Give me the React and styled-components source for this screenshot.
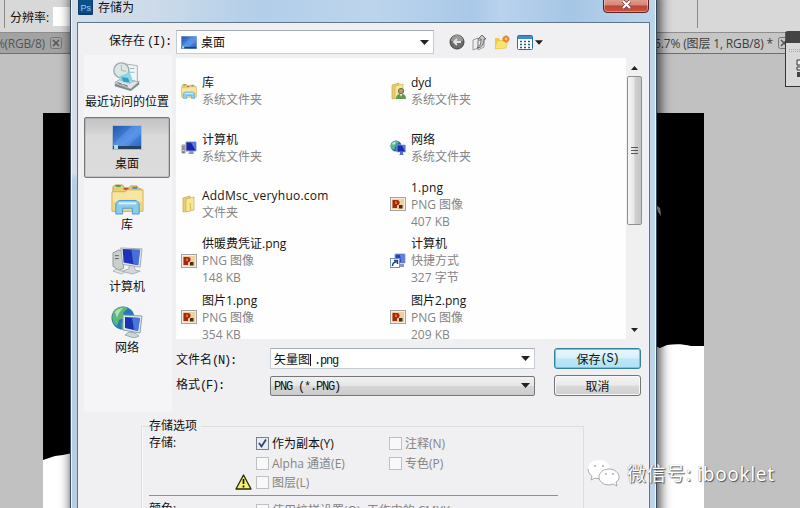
import React from 'react';
import styled, { createGlobalStyle } from 'styled-components';

const GlobalStyle = createGlobalStyle`
    *{
        box-sizing:border-box;
    }
    body{
        margin:0;
        overflow:hidden;
        font-family:"Open Sans", "Noto Sans CJK SC", sans-serif;
        font-size:12px;
        color:#111;
    }
    svg{
        display:block;
        flex:none;
    }
`
const Desktop = styled.div`
    position:relative;
    display:flex;
    flex-direction:column;
    width:800px;
    height:508px;
    overflow:hidden;
    background:#c1c1c2;
`
const OptionsBar = styled.div`
    display:flex;
    align-items:center;
    height:33px;
    flex:none;
    padding-left:4px;
    background:#d8d8d8;
    border-bottom:1px solid #8d8d8d;
`
const Divider = styled.div`
    width:1px;
    height:28px;
    background:#8b8b8b;
    margin-left:${props => props.$left || 0}px;
    align-self:flex-start;
`
const Resolution = styled.label`
    margin-left:5px;
    padding-top:1px;
    white-space:nowrap;
`
const ResolutionField = styled.div`
    width:81px;
    height:19px;
    margin-left:4px;
    background:#fff;
`
const TabBar = styled.div`
    display:flex;
    align-items:center;
    justify-content:space-between;
    height:21px;
    flex:none;
    background:#a2a2a2;
    border-bottom:1px solid #6f6f6f;
`
const Tab = styled.div`
    display:flex;
    align-items:center;
    gap:5px;
    height:20px;
    color:${props => props.$active ? '#3d3d3d' : '#565656'};
    background:${props => props.$active ? '#c6c6c6' : '#a2a2a2'};
    width:${props => props.$width}px;
    white-space:nowrap;
    overflow:hidden;
`
const TabName = styled.span`
    letter-spacing:${props => props.$spacing || 0}px;
    margin-left:${props => props.$shift || 0}px;
`
const Panel = styled.div`
    position:absolute;
    left:785px;
    top:31px;
    width:20px;
    height:56px;
    background:#d9d9d9;
    border:1px solid #343434;
    border-top:12px solid #444;
    border-radius:3px 0 0 0;
    padding:5px 0 0 3px;
`
const Dialog = styled.div`
    position:absolute;
    left:70px;
    top:-6px;
    width:587px;
    height:540px;
    display:flex;
    flex-direction:column;
    padding:0 6px;
    border:1px solid #38495b;
    background:
        linear-gradient(180deg, rgba(184,207,227,0) 178px, #b8cfe3 184px) 0 0 / 7px 100% no-repeat,
        linear-gradient(90deg, #d5dee8 0, #cddbe9 80px, #b2cee9 190px, #bdd5ec 300px, #a9c8e8 400px, #b9d2ed 430px, #a6c6e6 500px, #bed6eb 587px);
    box-shadow:inset 1px 0 #f1f6fb, inset -1px 0 #eef6fb, 2px 0 10px 2px rgba(0,0,0,.65);
`
const TitleBar = styled.div`
    display:flex;
    align-items:flex-start;
    height:27px;
    flex:none;
    padding:3px 1px 0 1px;
`
const Title = styled.div`
    margin-left:5px;
    line-height:19px;
    flex:1;
`
const CloseButton = styled.div`
    width:46px;
    height:15px;
    display:flex;
    justify-content:center;
    align-items:flex-end;
    padding-bottom:3px;
    border:1px solid #5b2320;
    border-radius:0 0 4px 4px;
    background:linear-gradient(#e0a095 0, #d98578 6px, #c04432 7px, #c95545 100%);
    box-shadow:inset 0 0 0 1px rgba(255,255,255,.35);
`
const Client = styled.div`
    flex:1;
    display:flex;
    flex-direction:column;
    background:#f0eff1;
    border:1px solid #5f7588;
    padding-left:6px;
`
const LookIn = styled.div`
    display:flex;
    align-items:center;
    height:35px;
    flex:none;
    padding-top:3px;
`
const Label = styled.div`
    width:${props => props.$width}px;
    padding-left:${props => props.$left || 0}px;
    padding-bottom:${props => props.$lift || 0}px;
    white-space:nowrap;
`
const Mono = styled.span`
    font-family:"Liberation Mono", monospace;
    font-size:12px;
    letter-spacing:-1.2px;
    margin-left:${props => props.$left || 0}px;
`
const Combo = styled.div`
    display:flex;
    align-items:center;
    width:${props => props.$width}px;
    height:${props => props.$height}px;
    padding:0 4px 0 ${props => props.$left || 3}px;
    border:1px solid ${props => props.$button ? '#777' : '#c6ccd3'};
    border-top-color:${props => props.$button ? '#777' : '#a3abb5'};
    border-radius:${props => props.$button ? 2 : 0}px;
    background:${props => props.$button ? 'linear-gradient(#f1f1f1 0, #e6e6e6 48%, #d6d6d6 52%, #cbcbcb 100%)' : '#fff'};
    white-space:nowrap;
`
const ComboText = styled.div`
    flex:1;
    padding-left:${props => props.$left || 0}px;
`
const Caret = styled.span`
    display:inline-block;
    width:1px;
    height:12px;
    margin-right:3px;
    vertical-align:-2px;
    background:#111;
`
const Tools = styled.div`
    display:flex;
    align-items:center;
    gap:7px;
    padding-left:15px;
`
const Browser = styled.div`
    display:flex;
    height:281px;
    flex:none;
`
const Places = styled.div`
    width:88px;
    height:357px;
    margin-top:-3px;
    flex:none;
    background:#f5f5f7;
`
const Place = styled.div`
    display:flex;
    flex-direction:column;
    align-items:center;
    width:86px;
    height:61.5px;
    padding-top:3px;
    border:1px solid ${props => props.$selected ? '#777' : 'transparent'};
    border-radius:2px;
    background:${props => props.$selected ? 'linear-gradient(#c3c3c4 0, #d2d2d3 24%, #dadadb 30%, #dcdcdd 100%)' : 'none'};
    box-shadow:${props => props.$selected ? 'inset 0 0 0 1px rgba(120,120,120,.25)' : 'none'};
`
const IconSlot = styled.div`
    height:34px;
    display:flex;
    align-items:center;
`
const PlaceName = styled.div`
    line-height:16px;
    margin-top:1px;
    white-space:nowrap;
`
const FileList = styled.div`
    display:flex;
    width:466px;
    margin-left:4px;
    background:#fefefe;
`
const Files = styled.div`
    flex:1;
    display:grid;
    grid-template-columns:209px 209px;
    grid-auto-rows:56.5px;
    padding:5px 0 0 5px;
`
const File = styled.div`
    display:flex;
    align-items:center;
    gap:5px;
`
const FileText = styled.div`
    line-height:17px;
    color:#858585;
    white-space:nowrap;
`
const FileName = styled.div`
    color:#151515;
    letter-spacing:${props => props.$spacing || 0}px;
`
const Scrollbar = styled.div`
    width:16px;
    display:flex;
    flex-direction:column;
    align-items:center;
    justify-content:space-between;
    background:#f0f0f1;
    padding:8px 0 7px;
`
const Thumb = styled.div`
    width:15px;
    height:149px;
    margin:6px 0 auto;
    display:flex;
    flex-direction:column;
    justify-content:center;
    align-items:center;
    gap:2px;
    border:1px solid #8f8f8f;
    border-radius:2px;
    background:linear-gradient(90deg, #f6f6f6 0, #e8e8e9 45%, #cfcfd1 55%, #c5c5c8 100%);
`
const Grip = styled.div`
    width:7px;
    height:1px;
    background:#555;
`
const Fields = styled.div`
    display:grid;
    grid-template-columns:94px 284px 87px;
    grid-auto-rows:21px;
    row-gap:6px;
    align-items:center;
    padding:9px 0 0 92px;
    height:87px;
    flex:none;
`
const Button = styled.div`
    display:flex;
    align-items:center;
    justify-content:center;
    height:21px;
    border:1px solid ${props => props.$primary ? '#35809c' : '#757575'};
    border-radius:3px;
    background:${props => props.$primary ? 'linear-gradient(#e9f7fd 0, #d8f0fa 48%, #bde6f5 52%, #aee3f6 100%)' : 'linear-gradient(#f3f3f3 0, #ebebeb 48%, #dadada 52%, #cfcfcf 100%)'};
    box-shadow:inset 0 0 0 1px ${props => props.$primary ? '#50d3f4' : '#f8f8f8'};
`
const Group = styled.fieldset`
    width:443px;
    height:120px;
    margin:-8px 0 0 57px;
    padding:0 0 0 7px;
    border:1px solid #dededf;
    box-shadow:inset 1px 0 #fafafa;
    flex:none;
`
const Legend = styled.legend`
    padding:0 4px 0 0;
    line-height:16px;
`
const Options = styled.div`
    display:grid;
    grid-template-columns:86px 21px 133px 170px;
    grid-template-rows:20px 20px 18px;
    align-items:center;
    border-bottom:1px solid #8f8f8f;
    width:409px;
    height:63px;
    margin-top:-1px;
`
const Check = styled.div`
    grid-column:${props => props.$col};
    display:flex;
    align-items:center;
    gap:3px;
    color:${props => props.$on ? '#111' : '#858585'};
    white-space:nowrap;
`
const Box = styled.div`
    width:13px;
    height:13px;
    flex:none;
    border:1px solid ${props => props.$on ? '#77808b' : '#bfc0c3'};
    background:${props => props.$on ? '#e7edf7' : '#f8f8f8'};
`
const ColorRow = styled.div`
    display:grid;
    grid-template-columns:107px 300px;
    height:24px;
    padding-top:5px;
    line-height:16px;
`
const Watermark = styled.div`
    position:absolute;
    left:587px;
    top:457px;
    display:flex;
    align-items:center;
    gap:7px;
    height:32px;
    font-family:"Noto Sans", "Noto Sans CJK SC", sans-serif;
    font-size:19px;
    letter-spacing:.65px;
    color:#fff;
    white-space:nowrap;
    text-shadow:1px 1px 1px #555, 0 0 1px #777;
`

const Arrow = ({ up, w = 9 }) => (
    <svg width={w} height={w > 7 ? 5 : 4} viewBox="0 0 9 5">
        <path d={up ? 'M0 5 4.500 0 9 5z' : 'M0 0h9L4.500 5z'} fill="#222" />
    </svg>
)

const CloseBox = () => (
    <svg width="12" height="12" viewBox="0 0 12 12" fill="none" stroke="#555">
        <rect x=".5" y=".5" width="11" height="11" rx="2" stroke="#777" />
        <path d="m3 3 6 6m0-6-6 6" strokeWidth="1.500" />
    </svg>
)

const PsIcon = () => (
    <svg width="15" height="17" viewBox="0 0 15 17">
        <rect width="15" height="17" rx="1" fill="#0b3c6d" />
        <rect x="1" y="1" width="13" height="14" fill="#0d4f8b" />
        <text x="2.500" y="13" fontSize="9" fontFamily="Liberation Sans" fill="#8fd0f8">Ps</text>
    </svg>
)

const DesktopIcon = ({ w, h }) => (
    <svg width={w} height={h} viewBox="0 0 30 25" preserveAspectRatio="none">
        <defs>
            <linearGradient id="blue" x1="0" y1="0" x2="1" y2="1">
                <stop offset="0" stopColor="#2457ad" />
                <stop offset=".55" stopColor="#4c8ae2" />
                <stop offset="1" stopColor="#2a62bd" />
            </linearGradient>
        </defs>
        <rect width="30" height="25" fill="#a9bccf" />
        <rect x="1" y="1" width="28" height="23" fill="url(#blue)" />
        <path d="M1 19 20 1h9v8L16 21H1z" fill="#79aff4" opacity=".3" />
        <rect x="1" y="21" width="28" height="3" fill="#264262" />
        <rect x="2" y="20" width="4" height="4" fill="#b1dae4" />
    </svg>
)

const RecentIcon = () => (
    <svg width="30" height="32" viewBox="0 0 32 34">
        <path d="m3 24 8-5 18 4-9 8z" fill="#e1e5e5" stroke="#9da5a6" />
        <path d="m3 25 17 6v2L3 28zM20 31l9-8v3l-9 7z" fill="#7e8b8c" />
        <path d="m13 4 14 2v17l-14-3z" fill="#f2f5f4" stroke="#a1acac" />
        <circle cx="10" cy="11" r="8" fill="#dce6e5" stroke="#9eacad" strokeWidth="1.500" />
        <path d="M10 5v6l5 1" fill="none" stroke="#a5b6b9" />
        <path d="m8 17 11-4 3 8-5 4-9-3z" fill="#8dd4e8" />
        <path d="m10 18 7 1 2 5-7-1z" fill="#3a9ec0" />
        <path d="M19 9h5m-5 4h5m-6 12 6-3" stroke="#82b7c4" />
        <path d="m6 24 5 2m1 0 5 2" stroke="#4d6169" />
    </svg>
)

const LibraryIcon = ({ w = 33, h = 31 }) => (
    <svg width={w} height={h} viewBox="0 0 34 32" preserveAspectRatio="none">
        <path d="M2 3 4 1h8l2 3h5l1-2h7l2 3h2v23H2z" fill="#e8cd73" stroke="#bfa14c" />
        <path d="M5 2h5" stroke="#42a149" strokeWidth="2" />
        <path d="M13 5h5" stroke="#c84433" strokeWidth="2" />
        <path d="M22 4h5" stroke="#418cc4" strokeWidth="2" />
        <path d="M1 8h14l2-2h16v22H1z" fill="#f8e6a0" stroke="#cbb05b" />
        <path d="M2 18h30v9H2z" fill="#f0d77e" />
        <path d="M5 31V20l3-3h18l3 3v11h-7v-6H12v6z" fill="#8accea" stroke="#4c9ac4" />
        <path d="M8 20h18" stroke="#d9f2fc" strokeWidth="2" />
    </svg>
)

const ComputerIcon = ({ w = 31, h = 29 }) => (
    <svg width={w} height={h} viewBox="0 0 32 30" preserveAspectRatio="none">
        <path d="m1 7 6-3 5 2v17l-5 2-6-4z" fill="#cbd0cd" stroke="#929a98" />
        <path d="M3 10h4m-4 3h4" stroke="#59625f" />
        <path d="m9 2 22 1-2 19-18-3z" fill="#dee4e6" stroke="#a3adb4" />
        <path d="m11 3 18 1-2 16-15-3z" fill="#1c34b5" />
        <path d="m20 4 9 0-2 16-5-2z" fill="#5c88e6" opacity=".7" />
        <path d="m18 20 5 1 1 4 5 1-8 3-11-3 7-2z" fill="#d3d8dc" stroke="#a7aeb3" />
        <path d="m4 24 9 3-3 2-9-3z" fill="#e4e5e4" stroke="#b0b4b3" />
    </svg>
)

const NetworkIcon = ({ w = 32, h = 32 }) => (
    <svg width={w} height={h} viewBox="0 0 32 32" preserveAspectRatio="none">
        <circle cx="12" cy="12" r="11.500" fill="#2878b8" />
        <path d="M3 5c4-5 10-5 14-3l-5 5 1 5-5 2-2 6C1 17 0 10 3 5z" fill="#5bb974" />
        <path d="M4 6c2-3 5-4 8-4l-4 5-2 5z" fill="#d5f1d2" opacity=".7" />
        <path d="m10 17 6 1-1 5-4 1z" fill="#47ad67" />
        <path d="m12 9 19 1-2 17-17-3z" fill="#dce6ec" stroke="#8ba0b2" />
        <path d="m14 11 15 1-2 13-13-3z" fill="#1933b0" />
        <path d="m21 11 8 1-2 13-4-1z" fill="#5b8ce8" opacity=".75" />
        <path d="m18 26 6 1 4 3-5 2-9-3z" fill="#ccd5da" stroke="#9eabb4" />
    </svg>
)

const SmallComputerIcon = () => (
    <svg width="16" height="16" viewBox="0 0 16 16">
        <path d="M1 5h3v8H1z" fill="#d4d7d9" stroke="#777d84" strokeWidth=".8" />
        <path d="M1.500 7h2m-2 2h2m-2 3h2" stroke="#444" />
        <path d="M5 2h10v9H5z" fill="#1824a9" stroke="#8f9cc4" />
        <path d="M10 2.500h4.500v8z" fill="#587de0" />
        <path d="M9 11h3l1 3H7z" fill="#8799c9" />
    </svg>
)

const SmallNetworkIcon = () => (
    <svg width="16" height="16" viewBox="0 0 16 16">
        <circle cx="6" cy="6" r="5.500" fill="#2870ad" />
        <path d="M1 4c2-4 6-4 8-2L6 5l-2 5C1 9 0 7 1 4z" fill="#56b893" />
        <path d="M2 4c1-2 2-2 4-2L4 5z" fill="#c8ecdc" />
        <path d="M7 5h8.500v7H7z" fill="#1a29bd" stroke="#a9b8dc" strokeWidth=".7" />
        <path d="M12 5.500h3v6z" fill="#557ce6" />
        <path d="M10 12h3v2l1 1H9l1-1z" fill="#5972be" />
    </svg>
)

const FolderIcon = ({ user }) => (
    <svg width="16" height="18" viewBox="0 0 16 18">
        <path d="M2 3 9 1v15l-7 1z" fill="#e7cf69" stroke="#c5a84a" strokeWidth=".7" />
        <path d="m5 4 8-2v13l-8 2z" fill="#f6e798" stroke="#c9b058" strokeWidth=".7" />
        <path d="m9 8 1 8" stroke="#d8b84b" />
        {user && <g>
            <circle cx="11" cy="9" r="2.600" fill="#c3996d" stroke="#5d7043" />
            <path d="M6 17c0-4 2-5 5-5s5 1 5 5z" fill="#62994c" />
            <path d="m10 12 1 3 1-3z" fill="#fff" />
        </g>}
    </svg>
)

const PngIcon = () => (
    <svg width="16" height="16" viewBox="0 0 16 16">
        <rect x=".5" y="1.500" width="15" height="13" fill="#f7ede0" stroke="#a4a3a3" />
        <rect x="2" y="3" width="12" height="10" fill="#f0cf9f" />
        <path d="M2.500 4H7c3.500 0 3.500 5 0 5.500V12H2.500z" fill="#a32a10" />
        <path d="M5 5.500h2V8H5z" fill="#e7712b" />
        <rect x="9" y="9" width="3.500" height="3.500" fill="#46300f" />
    </svg>
)

const ShortcutIcon = () => (
    <svg width="16" height="16" viewBox="0 0 16 16">
        <path d="M5 1h10v9H5z" fill="#273ebd" stroke="#9aaad3" />
        <path d="M10 2h5v7h-4z" fill="#6282df" />
        <path d="M8 11h6v3H8z" fill="#8598c4" />
        <rect x=".5" y="5.500" width="9" height="9" fill="#fff" stroke="#7194ba" />
        <path d="M2.500 13c0-3 1-4 4-4M4 7.500h3.500V11" fill="none" stroke="#1b4784" strokeWidth="1.500" />
    </svg>
)

const BackIcon = () => (
    <svg width="16" height="16" viewBox="0 0 16 16">
        <circle cx="8" cy="8" r="7" fill="#6c6c6c" stroke="#444" />
        <path d="M2 7a6 6 0 0 1 12 0z" fill="#9a9a9a" />
        <path d="M12 8H5m3-3L5 8l3 3" fill="none" stroke="#e3e3e3" strokeWidth="1.800" />
    </svg>
)

const UpIcon = () => (
    <svg width="15" height="17" viewBox="0 0 15 17">
        <path d="m1 6 5-2v10l-5 2zM6 7l6-2v8l-6 3z" fill="#ededed" stroke="#999" />
        <path d="M5 14c4-2 4-6 4-9H6l4-4 4 4h-2c0 5-2 9-7 9z" fill="#c6c6c6" stroke="#555" strokeWidth=".8" />
    </svg>
)

const NewFolderIcon = () => (
    <svg width="16" height="15" viewBox="0 0 16 15">
        <path d="M1 3h4l1 2h6v8L1 14z" fill="#edc94f" />
        <path d="m1 14 2-8 11-1-2 8z" fill="#fae370" stroke="#e6c451" strokeWidth=".7" />
        <circle cx="12" cy="4" r="3.300" fill="#e98841" />
        <path d="M12 0v8M8 4h8" stroke="#e98841" />
        <circle cx="12" cy="4" r="1.200" fill="#ffd78d" />
    </svg>
)

const ViewIcon = () => (
    <svg width="16" height="15" viewBox="0 0 16 15">
        <rect x=".5" y=".5" width="15" height="14" rx="1" fill="#fff" stroke="#286da9" />
        <rect x="1" y="1" width="14" height="3" fill="#3d8bcb" />
        <path d="M3 6.500h2m2 0h2m2 0h2m-10 3h2m2 0h2m2 0h2m-10 3h2m2 0h2m2 0h2" stroke="#255a92" strokeWidth="1.500" />
    </svg>
)

const WarningIcon = () => (
    <svg width="17" height="16" viewBox="0 0 17 16">
        <path d="M8.500 1 16 15H1z" fill="#f7f16b" stroke="#28260b" strokeWidth="1.300" strokeLinejoin="round" />
        <path d="M8.500 5v5m0 1.500v2" stroke="#111" strokeWidth="1.700" />
    </svg>
)

const WechatIcon = () => (
    <svg width="33" height="30" viewBox="0 0 33 30">
        <path d="M12 2C5 2 1 6 1 11c0 3 2 6 4 7l-1 4 4-2 5 1c6 0 10-4 10-9 0-6-4-10-11-10z" fill="#fff" />
        <path d="M1 11c0 3 2 6 4 7l-1 4 4-2 5 1" fill="none" stroke="#999" strokeWidth=".8" />
        <path d="M22 11c-6 0-10 4-10 8s4 8 10 8l4-1 4 2-1-4c2-1 3-3 3-5 0-4-4-8-10-8z" fill="#fff" stroke="#888" strokeWidth=".7" />
        <path d="M7 8h2m6 0h2m1 8h2m5 0h2" stroke="#888" />
    </svg>
)

const Artwork = () => (
    <svg width="800" height="454" viewBox="0 54 800 454">
        <rect x="43" y="113" width="661" height="395" fill="#fff" />
        <path d="M43 113h661v233h-13c-8-2-16-2-24-1l-7 3-5-2v107H72l-9 2-8 1-12 4z" fill="#000" />
        <path d="m656 205 4 3 1 8-3-4z" fill="#bbb" />
    </svg>
)

const places = [
    { name: '最近访问的位置', icon: <RecentIcon /> },
    { name: '桌面', icon: <DesktopIcon w={30} h={25} />, selected: true },
    { name: '库', icon: <LibraryIcon /> },
    { name: '计算机', icon: <ComputerIcon /> },
    { name: '网络', icon: <NetworkIcon /> },
]

const files = [
    { name: '库', icon: <LibraryIcon w={16} h={15} />, info: ['系统文件夹'] },
    { name: 'dyd', icon: <FolderIcon user />, info: ['系统文件夹'] },
    { name: '计算机', icon: <SmallComputerIcon />, info: ['系统文件夹'] },
    { name: '网络', icon: <SmallNetworkIcon />, info: ['系统文件夹'] },
    { name: 'AddMsc_veryhuo.com', icon: <FolderIcon />, info: ['文件夹'], spacing: .22 },
    { name: '1.png', icon: <PngIcon />, info: ['PNG 图像', '407 KB'], spacing: .2 },
    { name: '供暖费凭证.png', icon: <PngIcon />, info: ['PNG 图像', '148 KB'] },
    { name: '计算机', icon: <ShortcutIcon />, info: ['快捷方式', '327 字节'] },
    { name: '图片1.png', icon: <PngIcon />, info: ['PNG 图像', '354 KB'] },
    { name: '图片2.png', icon: <PngIcon />, info: ['PNG 图像', '209 KB'] },
]

function SaveDialog() {
    return (
        <Dialog>
            <TitleBar>
                <PsIcon />
                <Title>存储为</Title>
                <CloseButton>
                    <svg width="11" height="9" viewBox="0 0 11 9">
                        <path d="m2 1 7 7m0-7L2 8" stroke="#633" strokeWidth="3.500" />
                        <path d="m2 1 7 7m0-7L2 8" stroke="#fff" strokeWidth="2.200" />
                    </svg>
                </CloseButton>
            </TitleBar>
            <Client>
                <LookIn>
                    <Label $width={92} $left={25} $lift={5}>保存在<Mono $left={2}>(I):</Mono></Label>
                    <Combo $width={258} $height={24} $left={4}>
                        <DesktopIcon w={16} h={13} />
                        <ComboText $left={4}>桌面</ComboText>
                        <Arrow />
                    </Combo>
                    <Tools>
                        <BackIcon />
                        <UpIcon />
                        <NewFolderIcon />
                        <ViewIcon />
                    </Tools>
                    <Label $left={2}><Arrow w={8} /></Label>
                </LookIn>
                <Browser>
                    <Places>
                        {places.map(place => (
                            <Place key={place.name} $selected={place.selected}>
                                <IconSlot>{place.icon}</IconSlot>
                                <PlaceName>{place.name}</PlaceName>
                            </Place>
                        ))}
                    </Places>
                    <FileList>
                        <Files>
                            {files.map((file, i) => (
                                <File key={i}>
                                    {file.icon}
                                    <FileText>
                                        <FileName $spacing={file.spacing}>{file.name}</FileName>
                                        {file.info.map(line => <div key={line}>{line}</div>)}
                                    </FileText>
                                </File>
                            ))}
                        </Files>
                        <Scrollbar>
                            <Arrow up w={7} />
                            <Thumb><Grip /><Grip /><Grip /></Thumb>
                            <Arrow w={7} />
                        </Scrollbar>
                    </FileList>
                </Browser>
                <Fields>
                    <Label>文件名<Mono>(N):</Mono></Label>
                    <Combo $width={265} $height={21}>
                        <ComboText>矢量图<Caret /><Mono>.png</Mono></ComboText>
                        <Arrow />
                    </Combo>
                    <Button $primary>保存<Mono>(S)</Mono></Button>
                    <Label $lift={4}>格式<Mono>(F):</Mono></Label>
                    <Combo $width={265} $height={20} $button>
                        <ComboText><Mono>PNG (*.PNG)</Mono></ComboText>
                        <Arrow />
                    </Combo>
                    <Button>取消</Button>
                </Fields>
                <Group>
                    <Legend>存储选项</Legend>
                    <Options>
                        <Label $lift={3}>存储:</Label>
                        <Check $col="3" $on>
                            <Box $on>
                                <svg width="11" height="11" viewBox="0 0 11 11">
                                    <path d="m2 5 2.500 3.500L9 1.500" fill="none" stroke="#34426e" strokeWidth="1.800" />
                                </svg>
                            </Box>
                            作为副本(Y)
                        </Check>
                        <Check $col="4"><Box />注释(N)</Check>
                        <Check $col="3"><Box />Alpha 通道(E)</Check>
                        <Check $col="4"><Box />专色(P)</Check>
                        <Check $col="2"><WarningIcon /></Check>
                        <Check $col="3"><Box />图层(L)</Check>
                    </Options>
                    <ColorRow>
                        <div>颜色:</div>
                        <Check><Box />使用校样设置(O): 工作中的 CMYK</Check>
                    </ColorRow>
                </Group>
            </Client>
        </Dialog>
    )
}

function App() {
    return (
        <>
            <GlobalStyle />
            <Desktop>
                <OptionsBar>
                    <Divider />
                    <Resolution>分辨率:</Resolution>
                    <ResolutionField />
                    <Divider $left={563} />
                </OptionsBar>
                <TabBar>
                    <Tab $width={66}><TabName $spacing={-.3} $shift={-5}>%(RGB/8)</TabName><CloseBox /></Tab>
                    <Tab $active $width={146}><TabName $spacing={-.15}>5.7% (图层 1, RGB/8) *</TabName><CloseBox /></Tab>
                </TabBar>
                <Artwork />
                <Panel>
                    <svg width="14" height="36" viewBox="0 0 14 36">
                        <path d="M0 1.500h14M0 3.500h14" stroke="#aaa" strokeDasharray="1 1" />
                        <path d="M8 12h6v5H8zM8 19h6v3H8z" fill="#eee" stroke="#333" />
                        <path d="M8 24h6v5H8z" fill="#444" />
                    </svg>
                </Panel>
                <SaveDialog />
                <Watermark>
                    <WechatIcon />
                    <span>微信号: ibooklet</span>
                </Watermark>
            </Desktop>
        </>
    );
}

export default App;
